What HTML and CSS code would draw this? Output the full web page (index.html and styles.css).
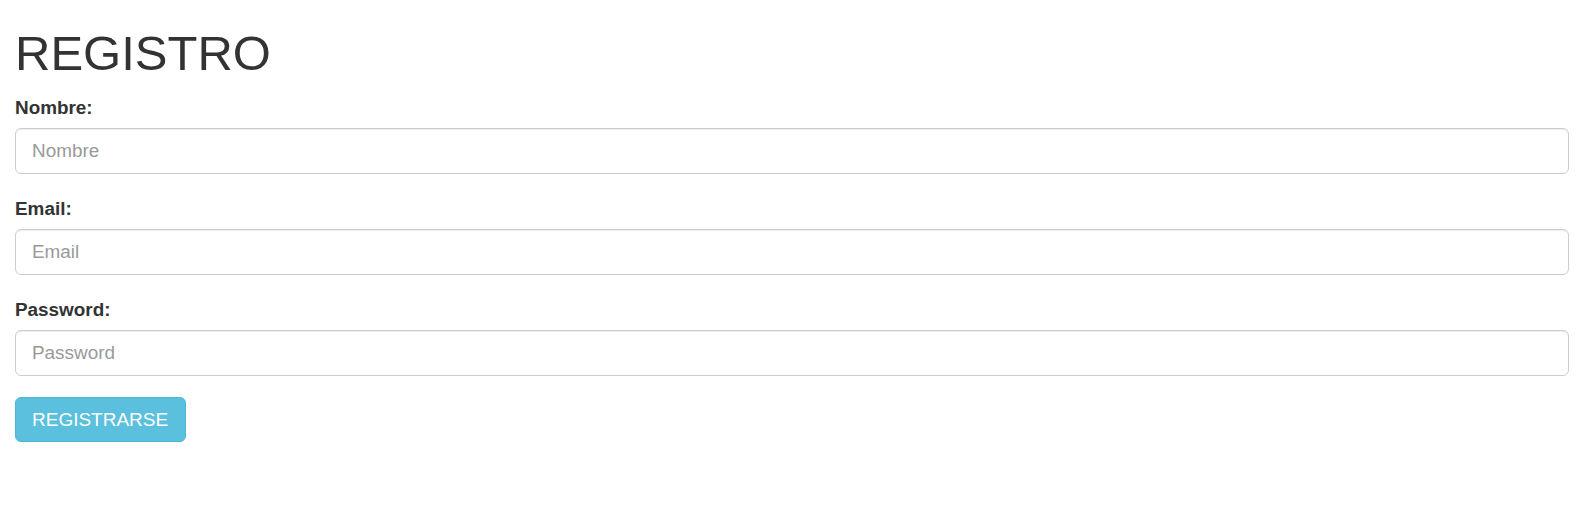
FILE: index.html
```html
<!DOCTYPE html>
<html lang="es">
<head>
<meta charset="utf-8">
<title>Registro</title>
<link rel="stylesheet" href="styles.css">
</head>
<body>
<div class="page">
  <h1 class="title">REGISTRO</h1>
  <form class="form">
    <div class="group">
      <label class="label" for="nombre">Nombre:</label>
      <input class="input" id="nombre" type="text" placeholder="Nombre">
    </div>
    <div class="group">
      <label class="label" for="email">Email:</label>
      <input class="input" id="email" type="email" placeholder="Email">
    </div>
    <div class="group">
      <label class="label" for="password">Password:</label>
      <input class="input" id="password" type="password" placeholder="Password">
    </div>
    <button class="btn" type="button">REGISTRARSE</button>
  </form>
</div>
</body>
</html>
```

FILE: styles.css
```css
* { box-sizing: border-box; }
html, body { margin: 0; padding: 0; background: #fff; }
body {
  font-family: "Liberation Sans", Arial, sans-serif;
  color: #333;
}
.page {
  padding: 27px 15px 0;
}
.title {
  margin: 0 0 14px;
  font-size: 49px;
  line-height: 53px;
  font-weight: 500;
  color: #333;
}
.form { display: flex; flex-direction: column; align-items: flex-start; }
.group {
  display: flex;
  flex-direction: column;
  align-self: stretch;
  margin-bottom: 21px;
}
.label {
  display: block;
  font-size: 18.9px;
  line-height: 27px;
  font-weight: 700;
  margin-bottom: 7px;
}
.input {
  display: block;
  width: 100%;
  height: 46px;
  padding: 0 16px;
  font-family: "Liberation Sans", Arial, sans-serif;
  font-size: 18.9px;
  color: #555;
  background: #fff;
  border: 1px solid #ccc;
  border-radius: 6px;
  box-shadow: inset 0 1px 1px rgba(0,0,0,.075);
  outline: none;
}
.input::placeholder { color: #999; opacity: 1; }
.btn {
  height: 45px;
  padding: 0 17px 0 16px;
  font-family: "Liberation Sans", Arial, sans-serif;
  font-size: 19px;
  color: #fff;
  background: #5bc0de;
  border: 1px solid #46b8da;
  border-radius: 6px;
  cursor: pointer;
}
```
